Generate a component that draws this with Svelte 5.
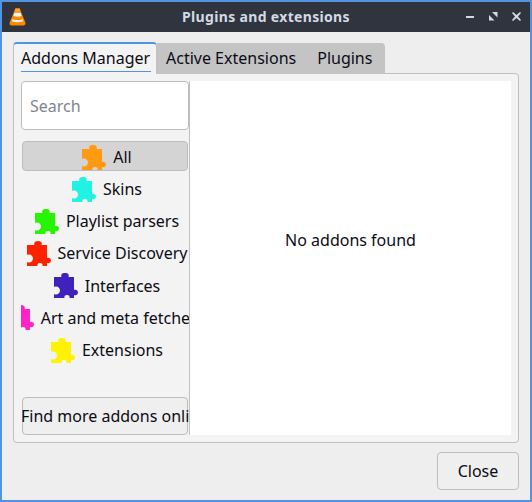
<script>
	const categories = [
		{ label: 'All', color: '#ff9a12', selected: true },
		{ label: 'Skins', color: '#22f2e4' },
		{ label: 'Playlist parsers', color: '#27f500' },
		{ label: 'Service Discovery', color: '#ff2200' },
		{ label: 'Interfaces', color: '#3f22bd' },
		{ label: 'Art and meta fetchers', color: '#ff22c4' },
		{ label: 'Extensions', color: '#fff200' }
	];
	const tabs = ['Active Extensions', 'Plugins'];
</script>

<div class="window">
	<header class="titlebar">
		<svg class="vlc" viewBox="0 0 18 18" aria-hidden="true">
			<path d="M7 1.5h4l5.500 13.500q.6 2-1.500 2.500H3q-2.100-.5-1.500-2.500Z" fill="#ff8800" />
			<path d="M6.100 5.500h5.800l1 3q-3.900 1.500-7.800 0Z" fill="#f4f4f4" />
			<path d="M7 1.500h4l.8 2.200q-2.800 1-5.600 0Z" fill="#ffa530" />
			<path d="M4.300 11.500q4.700 1.800 9.400 0l.7 2q-5.400 2-10.800 0Z" fill="#f4f4f4" />
		</svg>
		<span class="title">Plugins and extensions</span>
		<div class="controls">
			<svg viewBox="0 0 9 9" aria-hidden="true"><path d="M0 4h8v2H0Z" /></svg>
			<svg viewBox="0 0 9 9" aria-hidden="true"><path d="M3 0h5.500v5.500ZM0 3l5.500 5.500H0Z" /></svg>
			<svg viewBox="0 0 9 9" aria-hidden="true"><path d="M1 0l3.500 3L8 0l1 1-3 3.500L9 8 8 9 4.500 6 1 9 0 8l3-3.500L0 1Z" /></svg>
		</div>
	</header>

	<main class="content">
		<div class="tabs">
			<div class="tab active"><span>Addons Manager</span></div>
			<div class="inactive-tabs">
				{#each tabs as tab}
					<div class="tab">{tab}</div>
				{/each}
			</div>
		</div>

		<section class="pane">
			<aside class="sidebar">
				<input class="search" placeholder="Search" />
				<ul class="list">
					{#each categories as cat}
						<li class:selected={cat.selected}>
							<svg class="puzzle" viewBox="0 0 24 25" aria-hidden="true">
								<path
									fill={cat.color}
									d="M0 4H7.500C6.500 1.500 8 0 11 0C14 0 15.500 1.500 14.500 4H20V17C22 16 24 17.500 24 19.500C24 21.500 22 23 20 22V25H15.500C16 23 15 22 13 22C11 22 10 23 10.500 25H0V21C3 22.500 6 20.500 6 17.500C6 14.500 3 12.500 0 14Z"
								/>
							</svg>
							<span>{cat.label}</span>
						</li>
					{/each}
				</ul>
				<button class="more"><span>Find more addons online</span></button>
			</aside>
			<div class="results">No addons found</div>
		</section>

		<footer class="actions">
			<button class="close">Close</button>
		</footer>
	</main>
</div>

<style>
	:global(body) {
		margin: 0;
	}

	.window {
		box-sizing: border-box;
		width: 532px;
		height: 502px;
		display: flex;
		flex-direction: column;
		border: 2px solid #5294e2;
		background: #eeeeee;
		font-family: 'Noto Sans', sans-serif;
		font-size: 16px;
		color: #0c0c14;
	}

	.titlebar {
		position: relative;
		flex: none;
		height: 30px;
		display: flex;
		align-items: center;
		justify-content: center;
		background: #2f343f;
	}

	.vlc {
		position: absolute;
		left: 6px;
		top: 5px;
		width: 19px;
		height: 19px;
	}

	.title {
		margin-top: -1px;
		font-size: 14px;
		font-weight: 700;
		letter-spacing: 0.33px;
		color: #d3dae3;
	}

	.controls {
		position: absolute;
		right: 9px;
		top: 10px;
		display: flex;
		gap: 14px;
	}

	.controls svg {
		width: 9px;
		height: 9px;
		fill: #d3dae3;
	}

	.content {
		flex: 1;
		min-height: 0;
		display: flex;
		flex-direction: column;
		padding: 10px 11px 11px;
	}

	.tabs {
		flex: none;
		height: 32px;
		display: flex;
		align-items: flex-end;
		position: relative;
		z-index: 1;
		margin-bottom: -1px;
	}

	.tab {
		box-sizing: border-box;
		padding: 0 9px;
		line-height: 26px;
		white-space: nowrap;
	}

	.tab.active {
		width: 144px;
		height: 32px;
		padding: 0 0 0 7px;
		background: #f3f3f3;
		border: 1px solid #c0c0c0;
		border-top: 2px solid #5294e2;
		border-bottom: none;
		border-radius: 4px 4px 0 0;
	}

	.tab.active span {
		display: inline-block;
		width: 130px;
		height: 27px;
		margin-top: 1px;
		border-bottom: 1px solid #5294e2;
		box-sizing: border-box;
		line-height: 26px;
	}

	.inactive-tabs {
		width: 228px;
		height: 31px;
		box-sizing: border-box;
		display: flex;
		align-items: center;
		padding-bottom: 2px;
		background: #c4c4c4;
		border-radius: 0 4px 0 0;
	}

	.inactive-tabs .tab:first-child {
		padding-right: 12px;
	}

	.pane {
		flex: none;
		height: 370px;
		box-sizing: border-box;
		display: flex;
		padding: 7px;
		background: #f3f3f3;
		border: 1px solid #c0c0c0;
		border-radius: 0 4px 4px 4px;
	}

	.sidebar {
		box-sizing: border-box;
		width: 169px;
		flex: none;
		display: flex;
		flex-direction: column;
		min-width: 0;
		overflow: hidden;
		border-right: 1px solid #c0c0c0;
	}

	.search {
		box-sizing: border-box;
		width: 168px;
		height: 49px;
		padding: 0 8px;
		border: 1px solid #bdbdbd;
		border-radius: 4px;
		background: #fff;
		font: inherit;
		outline: none;
	}

	.search::placeholder {
		color: #7f858e;
		opacity: 1;
	}

	.list {
		list-style: none;
		margin: 11px 0 0;
		padding: 0;
		flex: 1;
		overflow: hidden;
	}

	.list li {
		box-sizing: border-box;
		height: 32.2px;
		display: flex;
		align-items: center;
		justify-content: center;
		gap: 7px;
		margin: 0 1px;
		padding-left: 4px;
		white-space: nowrap;
		border: 1px solid transparent;
		border-radius: 4px;
	}

	.list li.selected {
		height: 30px;
		padding-top: 2px;
		margin-bottom: 2px;
		background: #d4d4d4;
		border-color: #bdbdbd;
	}

	.puzzle {
		flex: none;
		width: 24px;
		height: 25px;
	}

	.more {
		box-sizing: border-box;
		flex: none;
		width: 166px;
		height: 38px;
		margin: 0 1px;
		padding: 0;
		display: flex;
		justify-content: flex-start;
		align-items: center;
		white-space: nowrap;
		font: inherit;
		color: inherit;
		background: #efefef;
		border: 1px solid #bdbdbd;
		border-radius: 4px;
	}

	.more span {
		flex: none;
		margin-left: -2px;
	}

	.results {
		flex: 1;
		display: flex;
		align-items: center;
		justify-content: center;
		padding-bottom: 37px;
		background: #fff;
	}

	.actions {
		flex: 1;
		display: flex;
		justify-content: flex-end;
		align-items: flex-start;
		padding-top: 9px;
	}

	.close {
		box-sizing: border-box;
		width: 82px;
		height: 38px;
		padding: 0;
		font: inherit;
		color: inherit;
		background: #efefef;
		border: 1px solid #bdbdbd;
		border-radius: 4px;
	}
</style>
